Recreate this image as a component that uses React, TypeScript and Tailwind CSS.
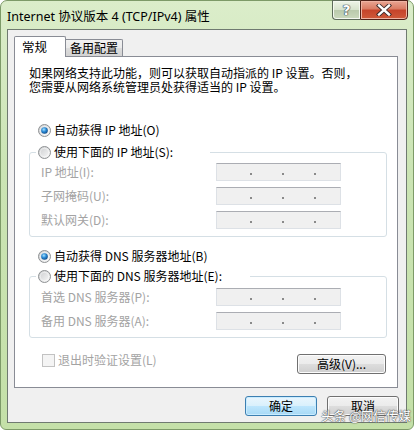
import React from "react";

const FONT = '"Noto Sans CJK SC", "Noto Sans", sans-serif';
const TITLE_FONT = '"Noto Sans", "Noto Sans CJK SC", sans-serif';

function Radio({ checked }: { checked?: boolean }) {
  return (
    <svg width="13" height="13" viewBox="0 0 13 13" className="shrink-0">
      <defs>
        <linearGradient id="rbg" x1="0" y1="0" x2="1" y2="1">
          <stop offset="0" stopColor="#c9cbcd" />
          <stop offset="1" stopColor="#fbfbfb" />
        </linearGradient>
        <radialGradient id="rdot" cx="0.4" cy="0.35" r="0.75">
          <stop offset="0" stopColor="#a8e4ff" />
          <stop offset="0.45" stopColor="#2a8ad6" />
          <stop offset="1" stopColor="#0c3f78" />
        </radialGradient>
      </defs>
      <circle cx="6.5" cy="6.5" r="6" fill="url(#rbg)" stroke="#8f9294" strokeWidth="1" />
      <circle cx="6.5" cy="6.5" r="4.2" fill="none" stroke="#ffffff" strokeOpacity="0.6" strokeWidth="0.8" />
      {checked && <circle cx="6.5" cy="6.5" r="3.3" fill="url(#rdot)" />}
    </svg>
  );
}

function IpBox() {
  return (
    <div className="w-[125px] h-[18px] bg-[#f0f0f0] border border-[#dde1e6] border-t-[#abadb3] flex items-start pt-[9px] pl-[33px] gap-[30px]">
      <div className="w-[2px] h-[2px] bg-[#8a8a8a]" />
      <div className="w-[2px] h-[2px] bg-[#8a8a8a]" />
      <div className="w-[2px] h-[2px] bg-[#8a8a8a]" />
    </div>
  );
}

function Row({ label }: { label: string }) {
  return (
    <div className="flex items-center h-[18px]">
      <div className="w-[186px] pl-[11px] text-[#a3a3a3] leading-[16px]">{label}</div>
      <IpBox />
    </div>
  );
}

function Button({ children, def, w }: { children: React.ReactNode; def?: boolean; w: string }) {
  return (
    <div
      className={
        (def
          ? "border-[#3c7fb1] bg-[linear-gradient(#eaf6fd_0%,#d9f0fc_50%,#bee6fd_50%,#a7d9f5_100%)] shadow-[inset_0_0_0_1px_#c9ecff] "
          : "border-[#707070] bg-[linear-gradient(#f2f2f2_0%,#ebebeb_50%,#dddddd_50%,#cfcfcf_100%)] shadow-[inset_0_0_0_1px_#fcfcfc] ") +
        "h-[20px] border rounded-[3px] flex items-center justify-center text-black leading-[16px] " +
        w
      }
    >
      {children}
    </div>
  );
}

export default function App() {
  return (
    <div className="w-[414px] h-[430px] bg-white text-[12px]" style={{ fontFamily: FONT }}>
      <div className="relative w-[414px] h-[430px] rounded-t-[7px] rounded-b-[6px] border border-[#7d9a68] bg-[linear-gradient(#dbedca,#cbe4b4_40%,#c4e0a8)] flex flex-col px-[6px]">
        {/* Title bar */}
        <div className="h-[28px] flex items-start justify-between">
          <div className="pt-[8px] text-[12.5px] leading-[16px] text-black" style={{ fontFamily: TITLE_FONT }}>
            Internet 协议版本 4 (TCP/IPv4) 属性
          </div>
          <div className="flex -mt-px mr-[-1px]">
            <div className="w-[28px] h-[20px] border border-[#5d6b5a] border-r-0 rounded-bl-[4px] bg-[linear-gradient(#eef4e8_0%,#d6e2cc_50%,#b9c9ab_50%,#cbd9bd_100%)] flex items-center justify-center shadow-[inset_0_0_0_1px_#f4f8f0]">
              <span
                className="text-[14px] font-bold text-white leading-[14px] [text-shadow:0_0_1px_#2a3a48,0_0_1px_#2a3a48,0_0_1px_#2a3a48]"
                style={{ fontFamily: '"DejaVu Sans", sans-serif' }}
              >
                ?
              </span>
            </div>
            <div className="w-[48px] h-[20px] border border-[#4f2118] rounded-br-[4px] bg-[linear-gradient(#e9a694_0%,#d97a62_45%,#c5432a_50%,#cf5a3a_100%)] flex items-center justify-center shadow-[inset_0_0_0_1px_#eeb3a2]">
              <svg width="16" height="12" viewBox="0 0 16 12">
                <path d="M3 1.5 L13 10.5 M13 1.5 L3 10.5" stroke="#3a2a2a" strokeWidth="4.2" strokeLinecap="square" />
                <path d="M3 1.5 L13 10.5 M13 1.5 L3 10.5" stroke="#ffffff" strokeWidth="2.4" strokeLinecap="square" />
              </svg>
            </div>
          </div>
        </div>

        {/* Client area */}
        <div className="w-[400px] h-[394px] border border-[#6f7a70] bg-[#f0f0f0] flex flex-col pt-[6px]">
          {/* Tabs */}
          <div className="flex items-end h-[20px] pl-[6px]">
            <div className="relative z-10 -mb-px w-[52px] h-[21px] bg-white border border-b-0 border-[#898c95] rounded-t-[2px] pl-[7px] pt-[2px] leading-[16px] text-[12.5px] text-black">
              常规
            </div>
            <div className="w-[57px] h-[17px] border border-l-0 border-b-0 border-[#898c95] rounded-tr-[2px] bg-[linear-gradient(#f2f2f2_0%,#ebebeb_50%,#dddddd_50%,#d2d2d2_100%)] pl-[4px] leading-[16px] text-black">
              备用配置
            </div>
          </div>

          {/* Panel */}
          <div className="ml-[6px] w-[384px] h-[332px] border border-[#898c95] bg-white flex flex-col">
            <div className="mt-[9px] pl-[14px] leading-[14px] text-black">
              <div>如果网络支持此功能，则可以获取自动指派的 IP 设置。否则，</div>
              <div>您需要从网络系统管理员处获得适当的 IP 设置。</div>
            </div>

            <div className="mt-[28px] ml-[23px] h-[16px] flex items-center gap-[3px] text-black">
              <Radio checked />
              <span className="leading-[16px]">自动获得 IP 地址(O)</span>
            </div>

            <div className="mt-[14px] ml-[14px] w-[358px] border border-[#d5dfe5] rounded-[3px] flex flex-col pb-[7px]">
              <div className="-mt-[9px] ml-[6px] pl-[2px] w-[174px] h-[16px] bg-white flex items-center gap-[3px] text-black">
                <Radio />
                <span className="leading-[16px]">使用下面的 IP 地址(S):</span>
              </div>
              <div className="mt-[3px] flex flex-col gap-[6px]">
                <Row label="IP 地址(I):" />
                <Row label="子网掩码(U):" />
                <Row label="默认网关(D):" />
              </div>
            </div>

            <div className="mt-[11px] ml-[23px] h-[16px] flex items-center gap-[3px] text-black">
              <Radio checked />
              <span className="leading-[16px]">自动获得 DNS 服务器地址(B)</span>
            </div>

            <div className="mt-[12px] ml-[14px] w-[358px] border border-[#d5dfe5] rounded-[3px] flex flex-col pb-[7px]">
              <div className="-mt-[9px] ml-[6px] pl-[2px] w-[214px] h-[16px] bg-white flex items-center gap-[3px] text-black">
                <Radio />
                <span className="leading-[16px]">使用下面的 DNS 服务器地址(E):</span>
              </div>
              <div className="mt-[4px] flex flex-col gap-[6px]">
                <Row label="首选 DNS 服务器(P):" />
                <Row label="备用 DNS 服务器(A):" />
              </div>
            </div>

            <div className="mt-[15px] flex items-start justify-between">
              <div className="ml-[27px] flex items-center gap-[3px] h-[14px]">
                <div className="w-[13px] h-[13px] border border-[#c2c2c2] bg-[#f4f4f4]" />
                <span className="text-[#a3a3a3] leading-[14px]">退出时验证设置(L)</span>
              </div>
              <div className="mt-px mr-[11px]">
                <Button w="w-[89px]">高级(V)...</Button>
              </div>
            </div>
          </div>

          {/* Bottom buttons */}
          <div className="mt-[8px] flex justify-end gap-[10px] pr-[7px]">
            <Button def w="w-[72px]">确定</Button>
            <Button w="w-[72px]">取消</Button>
          </div>
        </div>

        {/* Watermark */}
        <div className="absolute right-[2px] bottom-[6px] text-[12.5px] leading-[15px] text-white [text-shadow:0_0_1px_#555,0_0_1px_#555,0_0_2px_#777]">
          头条 @网信传媒
        </div>
      </div>
    </div>
  );
}
